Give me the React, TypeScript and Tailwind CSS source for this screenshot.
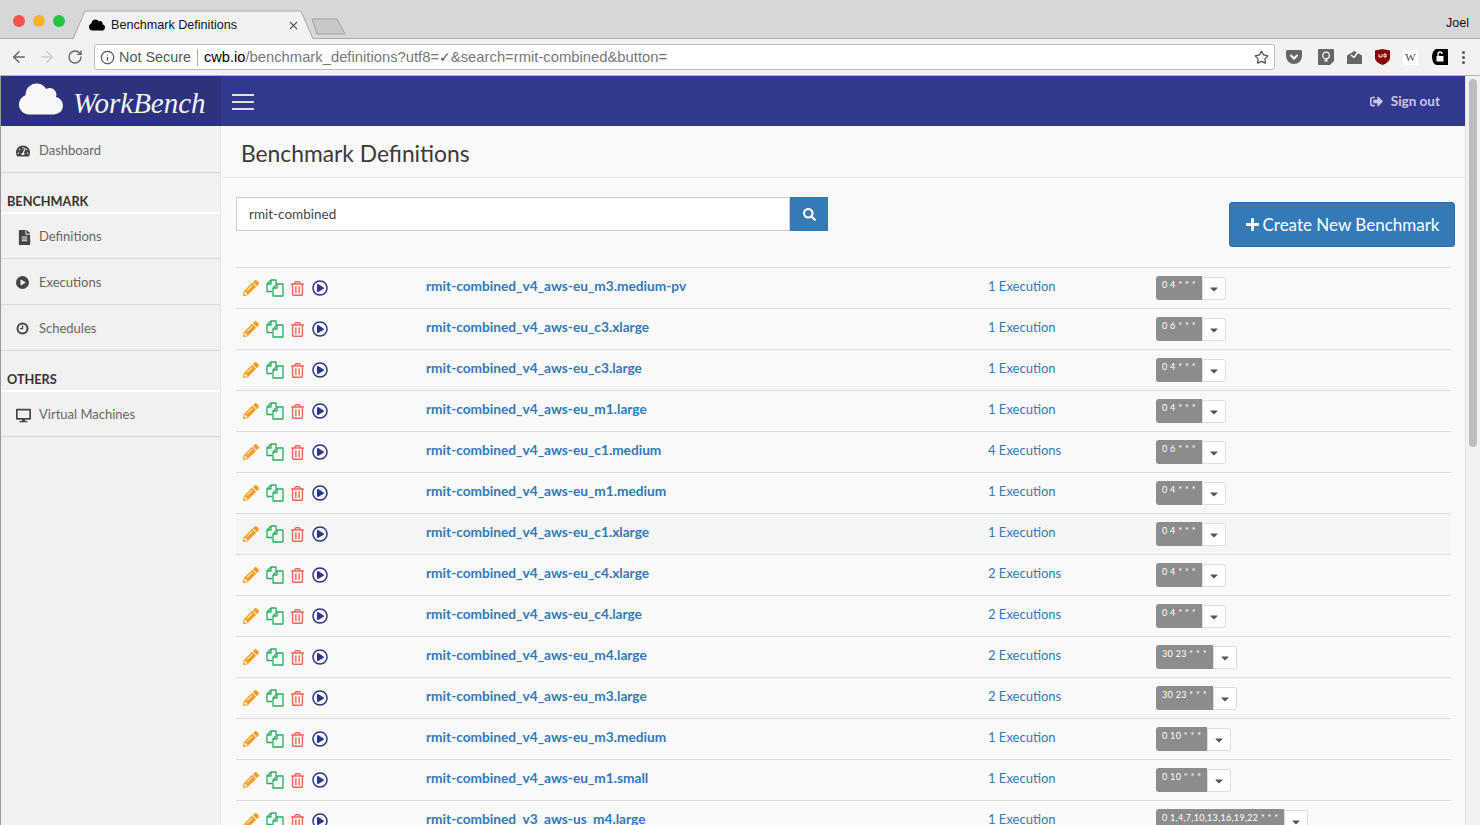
import { ArrowLeft, ArrowRight, Info, RotateCw, Star, X } from "lucide-react"
import {
    FaCaretDown,
    FaCloud,
    FaDesktop,
    FaFileAlt,
    FaPencilAlt,
    FaPlus,
    FaRegPlayCircle,
    FaRegTrashAlt,
    FaSearch,
    FaSignOutAlt,
    FaTachometerAlt,
} from "react-icons/fa"
import { FaCirclePlay } from "react-icons/fa6"

type Row = {
    name: string
    runs: string
    cron: string
    hover?: boolean
}

const rows: Row[] = [
    { name: "rmit-combined_v4_aws-eu_m3.medium-pv", runs: "1 Execution", cron: "0 4 * * *" },
    { name: "rmit-combined_v4_aws-eu_c3.xlarge", runs: "1 Execution", cron: "0 6 * * *" },
    { name: "rmit-combined_v4_aws-eu_c3.large", runs: "1 Execution", cron: "0 4 * * *" },
    { name: "rmit-combined_v4_aws-eu_m1.large", runs: "1 Execution", cron: "0 4 * * *" },
    { name: "rmit-combined_v4_aws-eu_c1.medium", runs: "4 Executions", cron: "0 6 * * *" },
    { name: "rmit-combined_v4_aws-eu_m1.medium", runs: "1 Execution", cron: "0 4 * * *" },
    { name: "rmit-combined_v4_aws-eu_c1.xlarge", runs: "1 Execution", cron: "0 4 * * *", hover: true },
    { name: "rmit-combined_v4_aws-eu_c4.xlarge", runs: "2 Executions", cron: "0 4 * * *" },
    { name: "rmit-combined_v4_aws-eu_c4.large", runs: "2 Executions", cron: "0 4 * * *" },
    { name: "rmit-combined_v4_aws-eu_m4.large", runs: "2 Executions", cron: "30 23 * * *" },
    { name: "rmit-combined_v4_aws-eu_m3.large", runs: "2 Executions", cron: "30 23 * * *" },
    { name: "rmit-combined_v4_aws-eu_m3.medium", runs: "1 Execution", cron: "0 10 * * *" },
    { name: "rmit-combined_v4_aws-eu_m1.small", runs: "1 Execution", cron: "0 10 * * *" },
    { name: "rmit-combined_v3_aws-us_m4.large", runs: "1 Execution", cron: "0 1,4,7,10,13,16,19,22 * * *" },
]

const CopyIcon = () => (
    <svg width="18" height="18" viewBox="0 0 18 18" fill="none" stroke="#27ae60" strokeWidth="1.3" strokeLinejoin="round">
        <path d="M6 12.5H1V5l4-4h5v4" />
        <path d="M5 1v4H1" />
        <path d="M7 17V9l4-4h6v12z" />
        <path d="M11 5v4H7" />
    </svg>
)

const RowIcons = () => (
    <div className="flex items-center w-[190px] pl-[7px]">
        <FaPencilAlt className="text-[16px] text-[#f5a024] mr-[7px]" />
        <span className="mr-[6px] flex"><CopyIcon /></span>
        <FaRegTrashAlt className="text-[15px] text-[#f0675a] mr-[7px]" />
        <FaRegPlayCircle className="text-[16px] text-[#2e3586]" />
    </div>
)

const SideItem = ({ icon, label, className }: { icon: React.ReactNode; label: string; className?: string }) => (
    <div className={"flex items-center h-[45px] pl-[15px] pt-[2px] border-b border-[#d8d8d8] text-[13px] text-[#666] " + (className ?? "")}>
        <span className="w-[23px] text-[#444] text-[13px] flex">{icon}</span>
        {label}
    </div>
)

export default function App() {
    return (
        <div className="h-[825px] w-[1480px] overflow-hidden flex flex-col bg-[#f9f9f9] font-['Lato','Noto_Sans',sans-serif]">
            {/* browser chrome */}
            <div className="h-[39px] shrink-0 bg-[#d6d7d9] border-b border-[#a8a8a8] flex items-end relative font-['Liberation_Sans',sans-serif]">
                <div className="flex gap-[8px] absolute left-[13px] top-[15px]">
                    <span className="w-3 h-3 rounded-full bg-[#f4544d]" />
                    <span className="w-3 h-3 rounded-full bg-[#fbb12d]" />
                    <span className="w-3 h-3 rounded-full bg-[#27c23f]" />
                </div>
                <svg className="absolute left-[72px] top-[10px]" width="246" height="30" viewBox="0 0 246 30">
                    <path d="M1 29 L13 1 H229 L241 29" fill="#f2f2f2" stroke="#a8a8a8" />
                </svg>
                <svg className="absolute left-[311px] top-[18px]" width="36" height="17" viewBox="0 0 36 17">
                    <path d="M1 1 H26 L34 16 H6 Z" fill="#c8c8c8" stroke="#a0a0a0" strokeLinejoin="round" />
                </svg>
                <FaCloud className="absolute left-[89px] top-[17px] text-[16px] text-black" />
                <span className="absolute left-[111px] top-[16px] text-[12.6px] text-[#111]">Benchmark Definitions</span>
                <X size={13} strokeWidth={2} className="absolute left-[287px] top-[19px] text-[#555]" />
                <span className="absolute right-[11px] top-[14px] text-[12.5px] text-[#111]">Joel</span>
            </div>
            <div className="h-[37px] shrink-0 bg-[#f2f2f2] border-b border-[#b5b5b5] flex items-center pl-[10px] font-['Liberation_Sans',sans-serif]">
                <ArrowLeft size={18} className="text-[#666]" />
                <ArrowRight size={18} className="text-[#ccc] ml-[10px]" />
                <RotateCw size={16} className="text-[#666] ml-[11px]" />
                <div className="ml-[11px] w-[1181px] h-[26px] bg-white border border-[#bbb] rounded-[3px] flex items-center pl-[5px] pt-[1px] text-[14.4px]">
                    <Info size={15} className="text-[#555]" />
                    <span className="ml-[4px] text-[#555]">Not Secure</span>
                    <span className="mx-[6px] w-px h-[17px] bg-[#aaa]" />
                    <span className="text-black text-[14.6px]">cwb.io</span>
                    <span className="text-[#777] text-[14.8px]">/benchmark_definitions?utf8=<span className="font-['DejaVu_Sans',sans-serif] font-bold text-[14px] text-[#555]">✓</span>&amp;search=rmit-combined&amp;button=</span>
                    <Star size={15} strokeWidth={2} className="ml-auto mr-[5px] text-[#555]" />
                </div>
                <div className="flex items-center ml-[10px]">
                    <svg width="16" height="14" viewBox="0 0 16 14" className="ml-[1px]">
                        <path d="M0 1.5Q0 0 1.5 0h13Q16 0 16 1.5V6a8 8 0 0 1-16 0z" fill="#666" />
                        <path d="M4.5 5 8 8.5 11.5 5" fill="none" stroke="#fff" strokeWidth="2" />
                    </svg>
                    <svg width="16" height="16" viewBox="0 0 16 16" className="ml-[16px]">
                        <path d="M1 0h14a1 1 0 0 1 1 1v11l-4 4H1a1 1 0 0 1-1-1V1a1 1 0 0 1 1-1z" fill="#666" />
                        <circle cx="8" cy="6.5" r="3.3" fill="none" stroke="#fff" strokeWidth="1.2" />
                        <path d="M6.5 10.5v2h3v-2" fill="#fff" />
                    </svg>
                    <svg width="15" height="14" viewBox="0 0 15 14" className="ml-[13px]">
                        <path d="M0 5.5 7.5 1 15 5.5V14H0z" fill="#666" />
                        <path d="M4 5l3 2.5L11 2" fill="none" stroke="#fff" strokeWidth="1.5" />
                    </svg>
                    <svg width="15" height="16" viewBox="0 0 15 16" className="ml-[13px]">
                        <path d="M0 1.5 7.5 0 15 1.5V9q0 4-7.5 7Q0 13 0 9z" fill="#800" />
                        <path d="M4 5v3h3V5M9 8V5h2v3z" fill="none" stroke="#fff" strokeWidth="1" />
                    </svg>
                    <span className="ml-[13px] w-[15px] h-[15px] bg-white text-[#444] text-[11px] flex items-center justify-center font-['Liberation_Serif',serif]">W</span>
                    <svg width="16" height="16" viewBox="0 0 16 16" className="ml-[14px]">
                        <path d="M5 0h11v16H5A5 8 0 0 1 5 0z" fill="#000" />
                        <rect x="4.5" y="7" width="7" height="5.5" fill="#fff" />
                        <path d="M6 7V5a2 2 0 0 1 4 0" fill="none" stroke="#fff" strokeWidth="1.3" />
                    </svg>
                    <div className="ml-[14px] flex flex-col gap-[2px]">
                        <span className="w-[3px] h-[3px] rounded-full bg-[#555]" />
                        <span className="w-[3px] h-[3px] rounded-full bg-[#555]" />
                        <span className="w-[3px] h-[3px] rounded-full bg-[#555]" />
                    </div>
                </div>
            </div>

            <div className="flex-1 flex min-h-0">
                <div className="flex-1 min-w-0 flex flex-col border-l border-[#999]">
                    {/* app header */}
                    <div className="h-[50px] shrink-0 flex bg-[#32398d]">
                        <div className="w-[220px] bg-[#2d327e] flex items-center pl-[18px]">
                            <FaCloud className="text-[44px] text-[#f8f8f8] -mt-[5px]" />
                            <span className="ml-[10px] mt-[4px] text-[29px] italic text-[#f4f4f4] font-['Liberation_Serif',serif] leading-none">WorkBench</span>
                        </div>
                        <div className="flex flex-col gap-[5px] ml-[11px] mt-[18px]">
                            <span className="w-[22px] h-[2px] bg-[#dfe0ee]" />
                            <span className="w-[22px] h-[2px] bg-[#dfe0ee]" />
                            <span className="w-[22px] h-[2px] bg-[#dfe0ee]" />
                        </div>
                        <div className="ml-auto flex items-center mr-[25px] text-[13.5px] font-bold text-[#c5c8e6]">
                            <FaSignOutAlt className="text-[13px] mr-[8px]" />
                            Sign out
                        </div>
                    </div>

                    <div className="flex-1 flex min-h-0">
                        {/* sidebar */}
                        <div className="w-[220px] shrink-0 bg-[#f1f1f1] border-r border-[#e6e6e6]">
                            <SideItem className="h-[47px] pt-[4px]" icon={<FaTachometerAlt className="text-[14px]" />} label="Dashboard" />
                            <div className="h-[41px] pl-[6px] pt-[20px] text-[12.7px] font-bold text-[#333] border-b-2 border-white leading-[17px]">BENCHMARK</div>
                            <SideItem icon={<FaFileAlt className="text-[15px] ml-[1px]" />} label="Definitions" />
                            <SideItem className="h-[46px]" icon={<FaCirclePlay />} label="Executions" />
                            <SideItem className="h-[46px]" icon={<svg width="13" height="13" viewBox="0 0 13 13" fill="none" stroke="#444" strokeWidth="2"><circle cx="6.5" cy="6.5" r="5" /><path d="M6.5 3.5v3.2H4" strokeWidth="1.3" /></svg>} label="Schedules" />
                            <div className="h-[41px] pl-[6px] pt-[20px] text-[12.7px] font-bold text-[#333] border-b-2 border-white leading-[17px]">OTHERS</div>
                            <SideItem icon={<FaDesktop className="text-[15px]" />} label="Virtual Machines" />
                        </div>

                        {/* main */}
                        <div className="flex-1 min-w-0 flex flex-col">
                            <div className="h-[52px] shrink-0 pl-[20px] pt-[4px] flex items-center border-b border-[#e6e6e6] text-[22.8px] text-[#3a3a3a]">Benchmark Definitions</div>
                            <div className="pl-[15px] pr-[10px] overflow-hidden">
                                <div className="flex items-start justify-between pt-[19px] h-[89px]">
                                    <div className="flex">
                                        <div className="w-[554px] h-[34px] bg-white border border-[#ccc] pl-[12px] pt-[1px] flex items-center text-[13.5px] text-[#444]">rmit-combined</div>
                                        <div className="w-[38px] h-[34px] bg-[#337ab7] flex items-center justify-center text-white text-[13px]"><FaSearch /></div>
                                    </div>
                                    <div className="mt-[5px] w-[226px] h-[45px] bg-[#337ab7] border border-[#2e6da4] rounded-[3px] flex items-center justify-center text-white text-[17px]">
                                        <FaPlus className="text-[15px] mr-[3px]" />
                                        Create New Benchmark
                                    </div>
                                </div>
                                <div className="w-[1215px]">
                                    {rows.map((r) => (
                                        <div key={r.name} className={"h-[41px] border-t border-[#ddd] flex items-center " + (r.hover ? "bg-[#f5f5f5]" : "")}>
                                            <RowIcons />
                                            <a className="w-[562px] text-[13.7px] font-bold text-[#337ab7] -mt-[3px]">{r.name}</a>
                                            <a className="w-[168px] text-[13px] text-[#337ab7] -mt-[3px]">{r.runs}</a>
                                            <div className="flex items-start">
                                                <span className="h-[24px] px-[6px] pt-[2px] bg-[#8c8c8c] rounded-l-[3px] text-[9px] leading-[14px] tracking-[0.3px] text-white whitespace-pre">{r.cron}</span>
                                                <span className="mt-[1px] w-[24px] h-[23px] bg-white border border-[#ddd] rounded-r-[3px] flex items-center justify-center text-[#555] text-[12px]"><FaCaretDown /></span>
                                            </div>
                                        </div>
                                    ))}
                                </div>
                            </div>
                        </div>
                    </div>
                </div>
                {/* scrollbar */}
                <div className="w-[15px] shrink-0 bg-[#f1f1f1] border-l border-[#e3e3e3] pt-[3px] flex justify-center">
                    <div className="w-[8px] h-[368px] rounded-full bg-[#bdbdbd]" />
                </div>
            </div>
        </div>
    )
}
